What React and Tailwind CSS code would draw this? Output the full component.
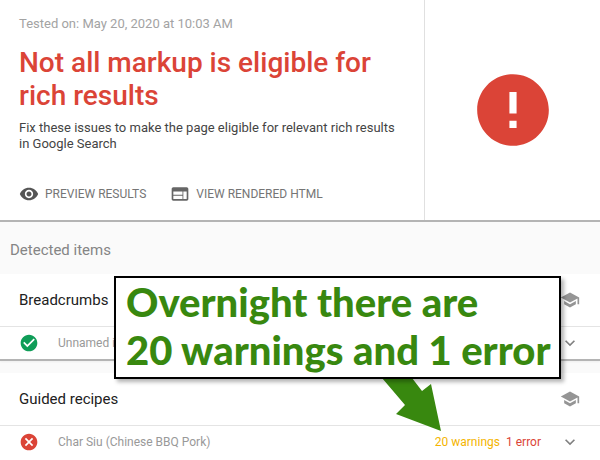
import { MdRemoveRedEye, MdWeb, MdSchool, MdCheckCircle, MdCancel, MdExpandMore, MdError } from 'react-icons/md';

const groups = [
  {
    id: 'breadcrumbs',
    title: 'Breadcrumbs',
    items: [{ name: 'Unnamed item', valid: true }]
  },
  {
    id: 'recipes',
    title: 'Guided recipes',
    items: [{ name: 'Char Siu (Chinese BBQ Pork)', valid: false, warnings: '20 warnings', errors: '1 error' }]
  }
];

function ResultHeader() {
  return (
    <header className="flex bg-white border-b-2 border-[#b4b4b4] shadow-xs">
      <div className="flex-1 pl-[19px] pr-5 pt-4 pb-4">
        <p className="text-[13px] leading-4 text-[#a3a3a3]">Tested on: May 20, 2020 at 10:03 AM</p>
        <h1 className="mt-3.5 text-[28px] leading-[33px] font-medium text-[#db4437]">
          Not all markup is eligible for rich results
        </h1>
        <p className="mt-2 text-[13px] leading-4 text-[#444444]">
          Fix these issues to make the page eligible for relevant rich results in Google Search
        </p>
        <div className="mt-8 flex gap-6 text-xs text-[#757575]">
          <button className="flex items-center gap-1.5 h-5">
            <MdRemoveRedEye className="size-5 text-[#555555]" />
            PREVIEW RESULTS
          </button>
          <button className="flex items-center gap-1.5 h-5">
            <MdWeb className="size-5 text-[#666666]" />
            VIEW RENDERED HTML
          </button>
        </div>
      </div>
      <div className="w-44 shrink-0 border-l border-[#e0e0e0] flex items-center justify-center">
        <MdError className="size-[86px] text-[#db4437]" />
      </div>
    </header>
  );
}

function ItemGroup({ group }) {
  return (
    <section className="bg-white border-b-2 border-[#b4b4b4] shadow-xs last-of-type:border-b-0 last-of-type:pb-2">
      <div className="h-13 pl-[19px] pr-5 flex items-center justify-between">
        <h3 className="text-[15px] text-[#212121]">{group.title}</h3>
        <button aria-label="Learn more">
          <MdSchool className="size-5 text-[#959595]" />
        </button>
      </div>
      {group.items.map((item) => (
        <div key={item.name} className="h-[33px] pl-[19px] pr-5 flex items-center border-t border-[#e4e4e4] text-xs">
          {item.valid
            ? <MdCheckCircle className="size-5 text-[#0f9d58]" />
            : <MdCancel className="size-5 text-[#db4437]" />}
          <span className="ml-[19px] flex-1 text-[#999999]">{item.name}</span>
          {item.warnings && <span className="text-[#f4b400]">{item.warnings}</span>}
          {item.errors && <span className="ml-1.5 text-[#db4437]">{item.errors}</span>}
          <button aria-label="Expand" className="ml-[19px]">
            <MdExpandMore className="size-5 text-[#808080]" />
          </button>
        </div>
      ))}
    </section>
  );
}

// Note laid over the results, with an arrow down to the counts
function Callout() {
  return (
    <div className="absolute top-0.5 left-[114px] right-[39px]">
      <svg className="absolute right-[119px] top-[102px] w-[60px] h-[54px]" viewBox="0 0 60 54" fill="#38880f">
        <path d="M0 0h30l10 13 9-7 10 47-45-17 9-9z" />
      </svg>
      <p className="relative bg-white border-2 border-black shadow-[3px_3px_4px_rgba(0,0,0,0.3)] pl-2.5 pb-[3px] font-['Lato_Black','Lato',sans-serif] font-black text-[40px] leading-12 whitespace-nowrap text-[#38880f]">
        Overnight there are
        <br />
        20 warnings and 1 error
      </p>
    </div>
  );
}

export default function App() {
  return (
    <div className="min-h-screen bg-white font-['Roboto',sans-serif]">
      <ResultHeader />
      <main className="bg-[#fafafa]">
        <h2 className="px-2.5 pt-[18px] pb-3.5 text-[15px] leading-5 text-[#858585]">Detected items</h2>
        <div className="relative flex flex-col gap-3">
          {groups.map((group) => (
            <ItemGroup key={group.id} group={group} />
          ))}
          <Callout />
        </div>
      </main>
    </div>
  );
}
